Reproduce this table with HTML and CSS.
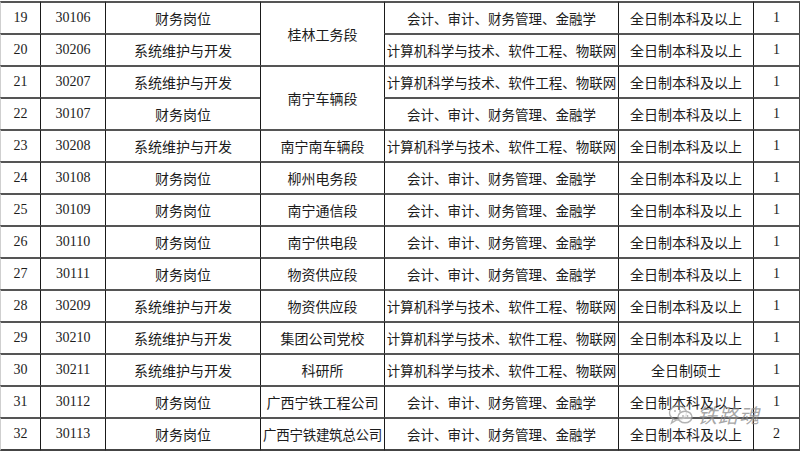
FILE: index.html
```html
<!DOCTYPE html>
<html lang="zh">
<head>
<meta charset="utf-8">
<link rel="stylesheet" href="styles.css">
</head>
<body>
<div class="page">
<table class="jobs">
<colgroup>
<col class="c-no"><col class="c-code"><col class="c-pos"><col class="c-unit"><col class="c-major"><col class="c-edu"><col class="c-num">
</colgroup>
<tbody>
<tr><td class="n">19</td><td class="n">30106</td><td>财务岗位</td><td rowspan="2">桂林工务段</td><td class="mj">会计、审计、财务管理、金融学</td><td>全日制本科及以上</td><td class="n">1</td></tr>
<tr><td class="n">20</td><td class="n">30206</td><td>系统维护与开发</td><td class="mj">计算机科学与技术、软件工程、物联网</td><td>全日制本科及以上</td><td class="n">1</td></tr>
<tr><td class="n">21</td><td class="n">30207</td><td>系统维护与开发</td><td rowspan="2">南宁车辆段</td><td class="mj">计算机科学与技术、软件工程、物联网</td><td>全日制本科及以上</td><td class="n">1</td></tr>
<tr><td class="n">22</td><td class="n">30107</td><td>财务岗位</td><td class="mj">会计、审计、财务管理、金融学</td><td>全日制本科及以上</td><td class="n">1</td></tr>
<tr><td class="n">23</td><td class="n">30208</td><td>系统维护与开发</td><td>南宁南车辆段</td><td class="mj">计算机科学与技术、软件工程、物联网</td><td>全日制本科及以上</td><td class="n">1</td></tr>
<tr><td class="n">24</td><td class="n">30108</td><td>财务岗位</td><td>柳州电务段</td><td class="mj">会计、审计、财务管理、金融学</td><td>全日制本科及以上</td><td class="n">1</td></tr>
<tr><td class="n">25</td><td class="n">30109</td><td>财务岗位</td><td>南宁通信段</td><td class="mj">会计、审计、财务管理、金融学</td><td>全日制本科及以上</td><td class="n">1</td></tr>
<tr><td class="n">26</td><td class="n">30110</td><td>财务岗位</td><td>南宁供电段</td><td class="mj">会计、审计、财务管理、金融学</td><td>全日制本科及以上</td><td class="n">1</td></tr>
<tr><td class="n">27</td><td class="n">30111</td><td>财务岗位</td><td>物资供应段</td><td class="mj">会计、审计、财务管理、金融学</td><td>全日制本科及以上</td><td class="n">1</td></tr>
<tr><td class="n">28</td><td class="n">30209</td><td>系统维护与开发</td><td>物资供应段</td><td class="mj">计算机科学与技术、软件工程、物联网</td><td>全日制本科及以上</td><td class="n">1</td></tr>
<tr><td class="n">29</td><td class="n">30210</td><td>系统维护与开发</td><td>集团公司党校</td><td class="mj">计算机科学与技术、软件工程、物联网</td><td>全日制本科及以上</td><td class="n">1</td></tr>
<tr><td class="n">30</td><td class="n">30211</td><td>系统维护与开发</td><td>科研所</td><td class="mj">计算机科学与技术、软件工程、物联网</td><td>全日制硕士</td><td class="n">1</td></tr>
<tr><td class="n">31</td><td class="n">30112</td><td>财务岗位</td><td>广西宁铁工程公司</td><td class="mj">会计、审计、财务管理、金融学</td><td>全日制本科及以上</td><td class="n">1</td></tr>
<tr><td class="n">32</td><td class="n">30113</td><td>财务岗位</td><td class="tight">广西宁铁建筑总公司</td><td class="mj">会计、审计、财务管理、金融学</td><td>全日制本科及以上</td><td class="n">2</td></tr>
</tbody>
</table>
<div class="watermark">
<svg class="wm-icon" width="26" height="22" viewBox="0 0 26 22">
<ellipse cx="10" cy="9" rx="8.5" ry="7" fill="none" stroke="#9a9a9a" stroke-width="1.4"/>
<path d="M5 15 L3.5 19 L8.5 16" fill="none" stroke="#9a9a9a" stroke-width="1.4"/>
<ellipse cx="17" cy="13" rx="7" ry="5.8" fill="#fff" fill-opacity="0.7" stroke="#9a9a9a" stroke-width="1.4"/>
<circle cx="7" cy="7" r="1" fill="#9a9a9a"/><circle cx="12" cy="7" r="1" fill="#9a9a9a"/>
<circle cx="15" cy="12" r="0.9" fill="#9a9a9a"/><circle cx="19.5" cy="12" r="0.9" fill="#9a9a9a"/>
</svg>
<span class="wm-text">铁路魂</span>
</div>
</div>
</body>
</html>
```
FILE: styles.css
```css
html, body {
  margin: 0;
  padding: 0;
  background: #ffffff;
}
.page {
  position: relative;
  width: 800px;
  height: 452px;
  overflow: hidden;
  padding-top: 1px;
  box-sizing: border-box;
}
.jobs {
  width: 800px;
  table-layout: fixed;
  border-collapse: separate;
  border-spacing: 0;
  font-family: "Noto Sans CJK SC", "Noto Sans", sans-serif;
  font-size: 14px;
  color: #1c1c1c;
}
.c-no { width: 40px; }
.c-code { width: 65px; }
.c-pos { width: 155px; }
.c-unit { width: 124px; }
.c-major { width: 234px; }
.c-edu { width: 135px; }
.c-num { width: 47px; }
.jobs td {
  height: 30px;
  padding: 0;
  text-align: center;
  vertical-align: middle;
  border-top: 2px solid #555555;
  border-left: 1px solid #1a1a1a;
  white-space: nowrap;
  overflow: hidden;
  line-height: 30px;
}
.jobs td:last-child {
  border-right: 1px solid #444;
}
.jobs tr td:first-child {
  border-left: 1px solid #cfcfcf;
}
.jobs tr:last-child td {
  border-bottom: 2px solid #444;
}
.jobs td.n {
  font-family: "Liberation Serif", serif;
  font-size: 14px;
}
.jobs td.mj {
  font-size: 13.5px;
}
.jobs td.tight {
  font-size: 13.5px;
  letter-spacing: -0.3px;
}
.watermark {
  position: absolute;
  left: 668px;
  top: 400px;
  display: flex;
  align-items: center;
  gap: 3px;
  opacity: 0.75;
}
.wm-text {
  font-family: "Noto Sans CJK SC", sans-serif;
  font-size: 20px;
  color: #8a8a8a;
  font-style: italic;
  letter-spacing: 1px;
}
```
